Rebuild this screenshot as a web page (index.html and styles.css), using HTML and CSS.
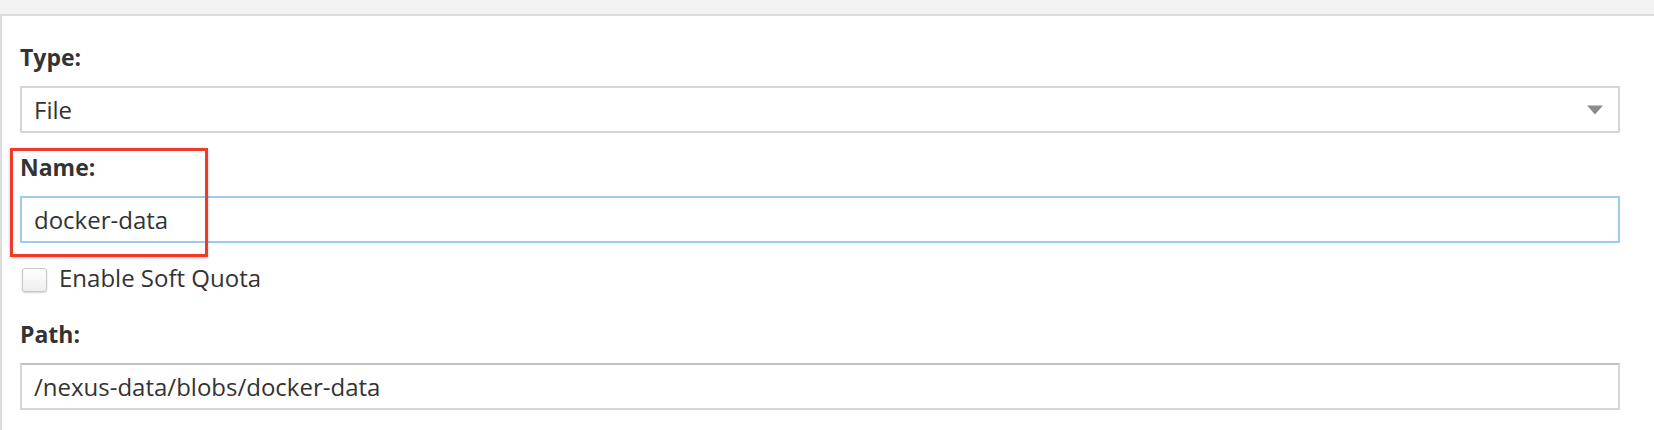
FILE: index.html
```html
<!DOCTYPE html>
<html>
<head>
<meta charset="utf-8">
<link rel="stylesheet" href="styles.css">
</head>
<body>
<div class="topband"></div>
<div class="panel">
  <div class="field field-type">
    <label class="label">Type:</label>
    <div class="select">
      <span class="value">File</span>
      <svg class="caret" width="16" height="10" viewBox="0 0 16 10"><path d="M0 0.5 H16 L8 9.5 Z" fill="#8c8c8c"/></svg>
    </div>
  </div>
  <div class="field">
    <label class="label">Name:</label>
    <div class="input focus"><span class="value">docker-data</span></div>
  </div>
  <div class="check-row">
    <span class="checkbox"></span>
    <span class="check-label">Enable Soft Quota</span>
  </div>
  <div class="field">
    <label class="label">Path:</label>
    <div class="input"><span class="value">/nexus-data/blobs/docker-data</span></div>
  </div>
  <div class="highlight"></div>
</div>
</body>
</html>
```

FILE: styles.css
```css
html, body {
  margin: 0;
  padding: 0;
  background: #ffffff;
}
body {
  font-family: "Open Sans", "Liberation Sans", sans-serif;
  color: #333333;
  width: 1654px;
  height: 430px;
  overflow: hidden;
}
.topband {
  height: 14px;
  background: #f3f3f3;
}
.panel {
  position: relative;
  border-top: 2px solid #dcdcdc;
  border-left: 2px solid #dcdcdc;
  padding: 26px 34px 0 18px;
  height: 416px;
  box-sizing: border-box;
}
.field {
  display: flex;
  flex-direction: column;
}
.label {
  font-weight: 700;
  font-size: 23px;
  line-height: 30px;
  color: #333;
  margin-bottom: 14px;
}
.select, .input {
  height: 47px;
  box-sizing: border-box;
  border: 2px solid #d6d6d6;
  display: flex;
  align-items: center;
  padding: 0 12px;
  font-size: 24px;
  color: #333;
}
.input {
  border-top-color: #c2c2c2;
}
.input.focus {
  border-color: #9dcbea;
}
.select {
  justify-content: space-between;
  padding-right: 15px;
}
.field-type {
  margin-bottom: 19px;
}
.check-row {
  display: flex;
  align-items: center;
  gap: 12px;
  height: 30px;
  margin: 22px 0 24px 2px;
}
.checkbox {
  width: 25px;
  height: 24px;
  box-sizing: border-box;
  border: 1px solid #c8c8c8;
  border-radius: 3px;
  background: linear-gradient(#ffffff, #eeeeee);
  box-shadow: 0 1px 2px rgba(0,0,0,0.18);
}
.check-label {
  font-size: 24px;
  line-height: 30px;
  color: #333;
  position: relative;
  top: -2px;
}
.highlight {
  position: absolute;
  left: 8px;
  top: 132px;
  width: 198px;
  height: 109px;
  box-sizing: border-box;
  border: 3px solid #f0392b;
  box-shadow: 0 1px 3px rgba(0,0,0,0.25);
  pointer-events: none;
}
```
